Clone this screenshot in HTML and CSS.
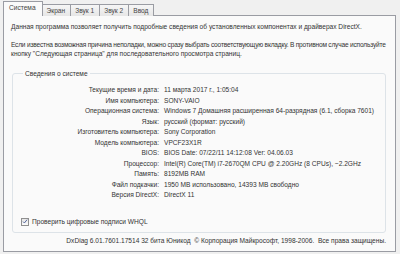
FILE: index.html
```html
<!DOCTYPE html>
<html lang="ru">
<head>
  <meta charset="UTF-8" />
  <title>Средство диагностики DirectX</title>
  <link rel="stylesheet" href="styles.css">
</head>
<body>
  <div class="window">
    <div class="tabs">
      <div class="tab active">Система</div>
      <div class="tab">Экран</div>
      <div class="tab">Звук 1</div>
      <div class="tab">Звук 2</div>
      <div class="tab">Ввод</div>
    </div>

    <div class="panel">
      <p class="intro">Данная программа позволяет получить подробные сведения об установленных компонентах и драйверах DirectX.</p>
      <p class="intro"><span class="tight">Если известна возможная причина неполадки, можно сразу выбрать соответствующую вкладку. В противном случае используйте</span><br>кнопку "Следующая страница" для последовательного просмотра страниц.</p>

      <fieldset class="group">
        <legend>Сведения о системе</legend>
        <div class="info">
          <span class="key">Текущие время и дата:</span><span>11 марта 2017 г., 1:05:04</span>
          <span class="key">Имя компьютера:</span><span>SONY-VAIO</span>
          <span class="key">Операционная система:</span><span>Windows 7 Домашняя расширенная 64-разрядная (6.1, сборка 7601)</span>
          <span class="key">Язык:</span><span>русский (формат: русский)</span>
          <span class="key">Изготовитель компьютера:</span><span>Sony Corporation</span>
          <span class="key">Модель компьютера:</span><span>VPCF23X1R</span>
          <span class="key">BIOS:</span><span>BIOS Date: 07/22/11 14:12:08 Ver: 04.06.03</span>
          <span class="key">Процессор:</span><span>Intel(R) Core(TM) i7-2670QM CPU @ 2.20GHz (8 CPUs), ~2.2GHz</span>
          <span class="key">Память:</span><span>8192MB RAM</span>
          <span class="key">Файл подкачки:</span><span>1950 MB использовано, 14393 MB свободно</span>
          <span class="key">Версия DirectX:</span><span>DirectX 11</span>
        </div>
        <label class="check">
          <span class="box">
            <svg width="7" height="7" viewBox="0 0 7 7"><path d="M1.2 3.6 L2.8 5.2 L5.9 1.4" fill="none" stroke="#4a5f97" stroke-width="1.1"/></svg>
          </span>
          Проверить цифровые подписи WHQL
        </label>
      </fieldset>

      <div class="copyright">DxDiag 6.01.7601.17514 32 бита Юникод&nbsp; © Корпорация Майкрософт, 1998-2006.&nbsp; Все права защищены.</div>
    </div>
  </div>
</body>
</html>
```

FILE: styles.css
```css
* {
  margin: 0;
  padding: 0;
  box-sizing: border-box;
}

body {
  background: #f0f0f0;
  font-family: 'Liberation Sans', Arial, sans-serif;
  font-size: 6.6px;
  color: #333;
}

.window {
  width: 400px;
  height: 254px;
  padding: 2px 4px 2px 3px;
  display: flex;
  flex-direction: column;
}

/* Tabs */
.tabs {
  display: flex;
  align-items: flex-end;
  height: 14px;
  margin-bottom: -1px;
  padding-left: 1px;
  position: relative;
  z-index: 1;
}

.tab {
  height: 12px;
  line-height: 11px;
  padding: 0 5px 0 4px;
  margin-left: -1px;
  border: 1px solid #9a9ca3;
  border-bottom: none;
  background: linear-gradient(#f6f6f6, #e6e6e6);
  color: #444;
}

.tab.active {
  height: 15px;
  line-height: 12px;
  padding: 0 6px 0 5px;
  background: #fafafa;
}

/* Panel */
.panel {
  flex: 1;
  border: 1px solid #9a9ca3;
  background: #fafafa;
  padding: 6px 9px 0 7px;
  display: flex;
  flex-direction: column;
}

.intro {
  line-height: 9px;
  margin-bottom: 9px;
  margin-right: -8px;
  white-space: nowrap;
}

.tight {
  letter-spacing: -0.2px;
}

.group {
  border: 1px solid #dde3e8;
  border-radius: 3px;
  margin: 3px 0 0 1px;
  padding: 4px 6px 6px 8px;
}

.group legend {
  padding: 0 2px;
  margin-left: 2px;
}

.info {
  display: grid;
  grid-template-columns: 138px 1fr;
  column-gap: 5px;
  line-height: 10.5px;
  margin-top: 4px;
}

.key {
  text-align: right;
}

.check {
  display: flex;
  align-items: center;
  gap: 3px;
  margin-top: 17px;
}

.box {
  width: 8px;
  height: 8px;
  border: 1px solid #8f8f8f;
  background: linear-gradient(#e6e6e6, #fafafa);
  display: flex;
  align-items: center;
  justify-content: center;
}

.copyright {
  text-align: right;
  margin-top: 4px;
}
```
